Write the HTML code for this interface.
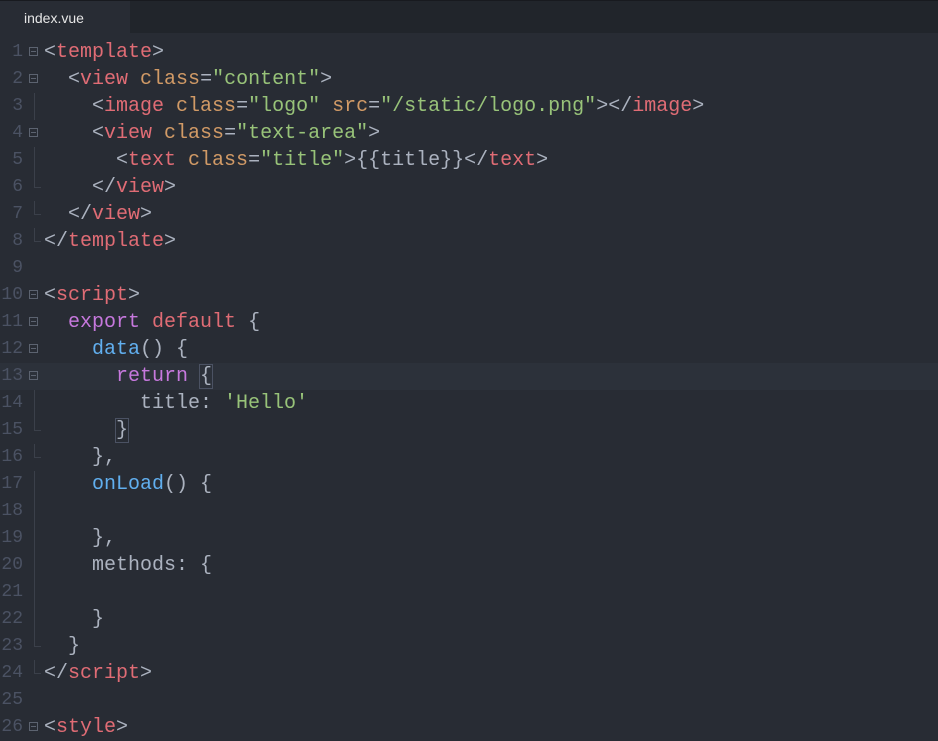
<!DOCTYPE html>
<html><head><style>
body{margin:0;width:938px;height:731px;overflow:hidden;background:#282c34;font-family:"Liberation Mono",monospace;}
.tabbar{position:absolute;left:0;top:0;width:938px;height:33px;background:#21252b;border-top:1px solid #181a1f;box-sizing:border-box}
.tab{position:absolute;left:0;top:0;width:130px;height:33px;background:#282c34;color:#e6e6e6;font:14px "Liberation Sans",sans-serif;line-height:34px;padding-left:24px;box-sizing:border-box}
.code{position:absolute;left:0;top:39px;width:938px}
.l{position:relative;height:27px;line-height:27px;font-size:20px;color:#abb2bf;white-space:pre}
.n{position:absolute;left:0;width:23px;text-align:right;color:#4b5263;font-size:18px}
.f{position:absolute;left:29px;top:8px;width:7px;height:7px;border:1px solid #5c6370}
.f:after{content:"";position:absolute;left:1px;top:3px;width:5px;height:1px;background:#5c6370}
.v{position:absolute;left:34px;top:0;width:1px;height:27px;background:#3b404a}
.e{position:absolute;left:34px;top:0;width:6px;height:13px;border-left:1px solid #3b404a;border-bottom:1px solid #3b404a}
.t{position:absolute;left:44px}
.hl{background:#2c313a}
.r{color:#e06c75}.o{color:#d19a66}.g{color:#98c379}.p{color:#c678dd}.b{color:#61afef}
.br{outline:1px solid #4b5263}
</style></head><body>
<div class="tabbar"><div class="tab">index.vue</div></div>
<div class="code">
<div class="l"><span class="n">1</span><span class="f"></span><span class="t">&lt;<span class="r">template</span>&gt;</span></div>
<div class="l"><span class="n">2</span><span class="f"></span><span class="t">  &lt;<span class="r">view</span> <span class="o">class</span>=<span class="g">"content"</span>&gt;</span></div>
<div class="l"><span class="n">3</span><span class="v"></span><span class="t">    &lt;<span class="r">image</span> <span class="o">class</span>=<span class="g">"logo"</span> <span class="o">src</span>=<span class="g">"/static/logo.png"</span>&gt;&lt;/<span class="r">image</span>&gt;</span></div>
<div class="l"><span class="n">4</span><span class="f"></span><span class="t">    &lt;<span class="r">view</span> <span class="o">class</span>=<span class="g">"text-area"</span>&gt;</span></div>
<div class="l"><span class="n">5</span><span class="v"></span><span class="t">      &lt;<span class="r">text</span> <span class="o">class</span>=<span class="g">"title"</span>&gt;{{title}}&lt;/<span class="r">text</span>&gt;</span></div>
<div class="l"><span class="n">6</span><span class="e"></span><span class="t">    &lt;/<span class="r">view</span>&gt;</span></div>
<div class="l"><span class="n">7</span><span class="e"></span><span class="t">  &lt;/<span class="r">view</span>&gt;</span></div>
<div class="l"><span class="n">8</span><span class="e"></span><span class="t">&lt;/<span class="r">template</span>&gt;</span></div>
<div class="l"><span class="n">9</span></div>
<div class="l"><span class="n">10</span><span class="f"></span><span class="t">&lt;<span class="r">script</span>&gt;</span></div>
<div class="l"><span class="n">11</span><span class="f"></span><span class="t">  <span class="p">export</span> <span class="r">default</span> {</span></div>
<div class="l"><span class="n">12</span><span class="f"></span><span class="t">    <span class="b">data</span>() {</span></div>
<div class="l hl"><span class="n">13</span><span class="f"></span><span class="t">      <span class="p">return</span> <span class="br">{</span></span></div>
<div class="l"><span class="n">14</span><span class="v"></span><span class="t">        title: <span class="g">'Hello'</span></span></div>
<div class="l"><span class="n">15</span><span class="e"></span><span class="t">      <span class="br">}</span></span></div>
<div class="l"><span class="n">16</span><span class="e"></span><span class="t">    },</span></div>
<div class="l"><span class="n">17</span><span class="v"></span><span class="t">    <span class="b">onLoad</span>() {</span></div>
<div class="l"><span class="n">18</span><span class="v"></span></div>
<div class="l"><span class="n">19</span><span class="v"></span><span class="t">    },</span></div>
<div class="l"><span class="n">20</span><span class="v"></span><span class="t">    methods: {</span></div>
<div class="l"><span class="n">21</span><span class="v"></span></div>
<div class="l"><span class="n">22</span><span class="v"></span><span class="t">    }</span></div>
<div class="l"><span class="n">23</span><span class="e"></span><span class="t">  }</span></div>
<div class="l"><span class="n">24</span><span class="e"></span><span class="t">&lt;/<span class="r">script</span>&gt;</span></div>
<div class="l"><span class="n">25</span></div>
<div class="l"><span class="n">26</span><span class="f"></span><span class="t">&lt;<span class="r">style</span>&gt;</span></div>
</div>
</body></html>
